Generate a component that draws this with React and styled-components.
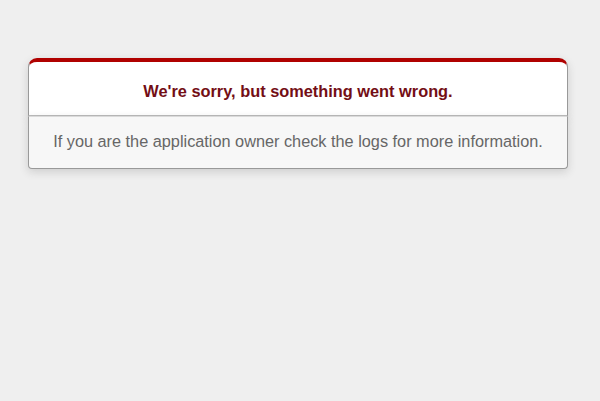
import React from 'react';
import styled, { createGlobalStyle } from 'styled-components';

const GlobalStyle = createGlobalStyle`
  html, body {
    margin: 0;
    background-color: #EFEFEF;
  }
  body {
    color: #2E2F30;
    text-align: center;
    font-family: "Liberation Sans", Arial, sans-serif;
    height: 401px;
  }
`;

// dialog wrapper
const Dialog = styled.div`
  width: 540px;
  margin: 58px 0 0 28px;
`;

// top part with the red border
const Header = styled.div`
  border: 1px solid #CCC;
  border-right-color: #999;
  border-left-color: #999;
  border-bottom-color: #BBB;
  border-top: #B00100 solid 4px;
  border-top-left-radius: 9px;
  border-top-right-radius: 9px;
  background-color: white;
  padding: 7px 10% 0;
  box-shadow: 0 3px 8px rgba(50, 50, 50, 0.17);
`;

const Title = styled.h1`
  font-size: 16.35px;
  color: #730E15;
  line-height: 24px;
  margin: 10px 0 12px;
  font-weight: bold;
`;

const Message = styled.p`
  margin: 0 0 1em;
  padding: 15px 8px 18px;
  font-size: 16.3px;
  line-height: 18px;
  background-color: #F7F7F7;
  border: 1px solid #CCC;
  border-right-color: #999;
  border-left-color: #999;
  border-bottom-color: #999;
  border-top-color: #DADADA;
  border-bottom-left-radius: 4px;
  border-bottom-right-radius: 4px;
  color: #666;
  box-shadow: 0 3px 8px rgba(50, 50, 50, 0.17);
`;

function App() {
  return (
    <>
      <GlobalStyle />
      <Dialog>
        <Header>
          <Title>We're sorry, but something went wrong.</Title>
        </Header>
        <Message>If you are the application owner check the logs for more information.</Message>
      </Dialog>
    </>
  );
}

export default App;
